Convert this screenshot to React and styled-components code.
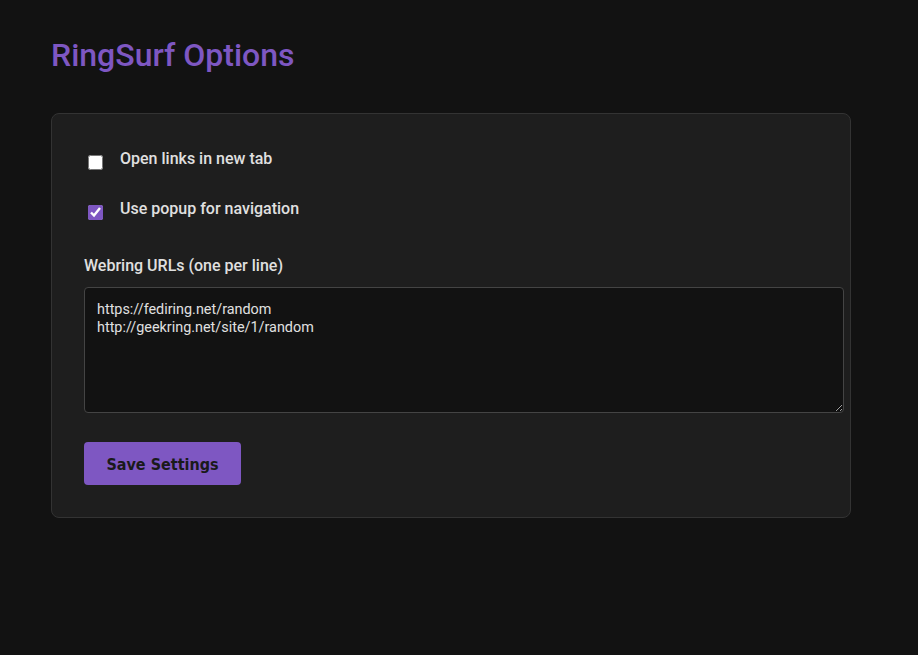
import React, { useState } from 'react'
import styled, { createGlobalStyle } from 'styled-components'

const GlobalStyle = createGlobalStyle`
  body {
    margin: 0;
    background: #121212;
    color: #e0e0e0;
    font-family: Roboto, "Liberation Sans", sans-serif;
  }
`

const Page = styled.div`
  padding: 0 51px;
  min-height: 655px;
`

const Title = styled.h1`
  margin: 0;
  padding-top: 36px;
  height: 113px;
  box-sizing: border-box;
  font-size: 32px;
  font-weight: 500;
  line-height: 38px;
  color: #7e57c2;
`

const Card = styled.div`
  width: 800px;
  box-sizing: border-box;
  background: #1e1e1e;
  border: 1px solid #333;
  border-radius: 8px;
  padding: 35px 32px 32px;
`

const CheckRow = styled.label`
  display: flex;
  align-items: flex-start;
  gap: 17px;
  height: 50px;
  font-size: 16px;
  font-weight: 500;
  color: #e0e0e0;
  cursor: pointer;
`

const Check = styled.input`
  margin: 6px 0 0 4px;
  width: 15px;
  height: 15px;
  accent-color: #7e57c2;
`

const FieldLabel = styled.div`
  margin-top: 7px;
  font-size: 16px;
  font-weight: 500;
  line-height: 20px;
  color: #e0e0e0;
`

const Urls = styled.textarea`
  display: block;
  margin-top: 11px;
  width: 760px;
  height: 126px;
  box-sizing: border-box;
  padding: 13px 12px 12px;
  background: #121212;
  color: #e0e0e0;
  border: 1px solid #444;
  border-radius: 4px;
  font-family: Roboto, "Liberation Sans", sans-serif;
  font-size: 14.4px;
  line-height: 18px;
  resize: vertical;
  outline: none;
`

const SaveButton = styled.button`
  margin-top: 29px;
  padding-top: 2px;
  width: 157px;
  height: 43px;
  background: #7e57c2;
  color: #1a1a1a;
  border: none;
  border-radius: 4px;
  font-family: "DejaVu Sans Condensed", "DejaVu Sans", sans-serif;
  font-stretch: condensed;
  font-size: 16px;
  font-weight: bold;
  cursor: pointer;
`

export default function App() {
  const [newTab, setNewTab] = useState(false)
  const [popup, setPopup] = useState(true)
  const [urls, setUrls] = useState('https://fediring.net/random\nhttp://geekring.net/site/1/random')

  return (
    <Page>
      <GlobalStyle />
      <Title>RingSurf Options</Title>
      <Card>
        <CheckRow>
          <Check type="checkbox" checked={newTab} onChange={(e) => setNewTab(e.target.checked)} />
          Open links in new tab
        </CheckRow>
        <CheckRow>
          <Check type="checkbox" checked={popup} onChange={(e) => setPopup(e.target.checked)} />
          Use popup for navigation
        </CheckRow>
        <FieldLabel>Webring URLs (one per line)</FieldLabel>
        <Urls value={urls} onChange={(e) => setUrls(e.target.value)} />
        <SaveButton>Save Settings</SaveButton>
      </Card>
    </Page>
  )
}
